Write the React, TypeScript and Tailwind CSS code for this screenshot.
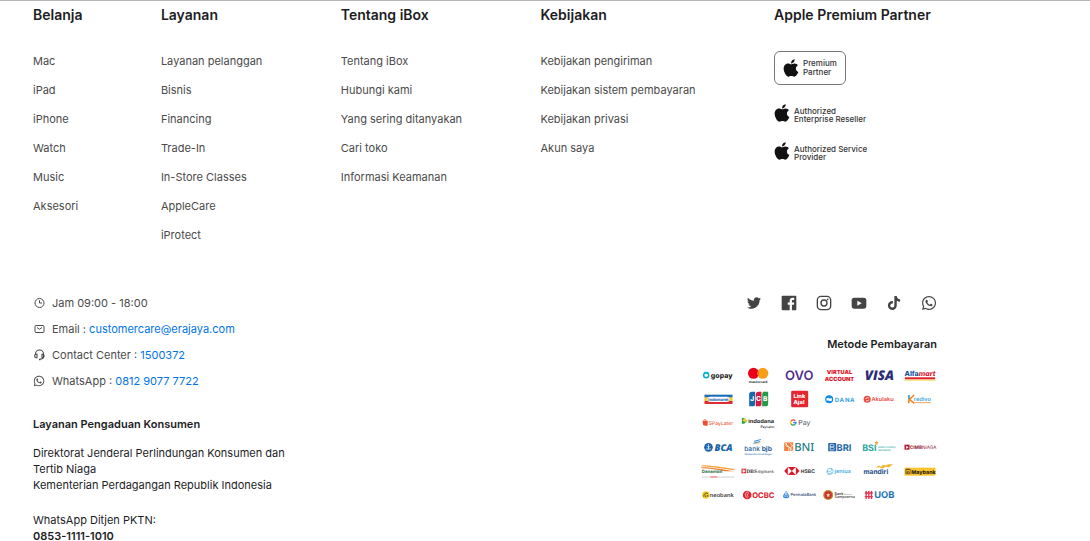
import type { ReactNode } from "react";
import { FaApple, FaTiktok, FaTwitter, FaWhatsapp } from "react-icons/fa";

const COLUMNS = [
  {
    title: "Belanja",
    links: ["Mac", "iPad", "iPhone", "Watch", "Music", "Aksesori"],
  },
  {
    title: "Layanan",
    links: [
      "Layanan pelanggan",
      "Bisnis",
      "Financing",
      "Trade-In",
      "In-Store Classes",
      "AppleCare",
      "iProtect",
    ],
  },
  {
    title: "Tentang iBox",
    links: [
      "Tentang iBox",
      "Hubungi kami",
      "Yang sering ditanyakan",
      "Cari toko",
      "Informasi Keamanan",
    ],
  },
  {
    title: "Kebijakan",
    links: [
      "Kebijakan pengiriman",
      "Kebijakan sistem pembayaran",
      "Kebijakan privasi",
      "Akun saya",
    ],
  },
];

function ClockIcon() {
  return (
    <svg viewBox="0 0 24 24" className="h-3 w-3" fill="none" stroke="currentColor" strokeWidth="2">
      <circle cx="13" cy="12" r="9" />
      <path d="M13 6.500V12h5" />
    </svg>
  );
}

function MailIcon() {
  return (
    <svg viewBox="0 0 24 24" className="h-3 w-3" fill="none" stroke="currentColor" strokeWidth="2">
      <rect x="4" y="5" width="18" height="14" rx="2" />
      <path d="M8 9l5 3.500L18 9" />
    </svg>
  );
}

function HeadsetIcon() {
  return (
    <svg viewBox="0 0 24 24" className="h-3 w-3" fill="none" stroke="currentColor" strokeWidth="2.2">
      <path d="M5 12v-2a8 8 0 0 1 16 0v5a5 5 0 0 1-5 5h-2" />
      <path d="M5 10.500h3v7H6a2.500 2.500 0 0 1-2.500-2.500v-2zM21 10.500h-3v7h1.500a2.500 2.500 0 0 0 2.500-2.500v-2z" />
      <path d="M12 21h3" strokeWidth="3" />
    </svg>
  );
}

function FacebookIcon() {
  return (
    <svg viewBox="0 0 24 24" className="h-4 w-4" fill="currentColor">
      <path d="M2.300 1h19.400c.7 0 1.300.6 1.300 1.300v19.400c0 .7-.6 1.300-1.300 1.300H16.400v-8.500h2.900l.4-3.400h-3.300V9c0-1 .3-1.600 1.700-1.600h1.700V4.300c-.3 0-1.300-.1-2.500-.1-2.600 0-4.300 1.500-4.300 4.400v2.500h-2.900v3.400H13V23H2.300C1.600 23 1 22.400 1 21.700V2.300C1 1.600 1.600 1 2.300 1z" />
    </svg>
  );
}

function InstagramIcon() {
  return (
    <svg viewBox="0 0 24 24" className="h-4 w-4" fill="none" stroke="currentColor" strokeWidth="2">
      <rect x="2" y="2" width="20" height="20" rx="5.500" />
      <circle cx="12" cy="12" r="4.500" />
      <circle cx="17.500" cy="6.500" r="1.300" fill="currentColor" stroke="none" />
    </svg>
  );
}

function YoutubeIcon() {
  return (
    <svg viewBox="0 0 24 24" className="h-4 w-4">
      <rect x="1" y="4" width="22" height="16.500" rx="4" fill="currentColor" />
      <path d="M9.500 8.500v7.500l6.500-3.750z" fill="#fff" />
    </svg>
  );
}

const SOCIALS = [
  { label: "Twitter", icon: <FaTwitter className="h-3.5 w-4" /> },
  { label: "Facebook", icon: <FacebookIcon /> },
  { label: "Instagram", icon: <InstagramIcon /> },
  { label: "YouTube", icon: <YoutubeIcon /> },
  { label: "TikTok", icon: <FaTiktok className="h-3.5 w-4" /> },
  { label: "WhatsApp", icon: <FaWhatsapp className="h-4 w-4" /> },
];

/* Every payment logo is drawn on the same 102x54 board */
function Logo({ name, children }: { name: string; children: ReactNode }) {
  return (
    <svg
      viewBox="0 0 102 54"
      role="img"
      aria-label={name}
      textRendering="geometricPrecision"
      className="h-[18px] w-full font-['Inter',sans-serif]"
    >
      {children}
    </svg>
  );
}

function PaymentLogos() {
  return (
    <div className="grid grid-cols-6 gap-1.5">
      <Logo name="GoPay">
        <circle cx="15" cy="28" r="7.500" fill="#fff" stroke="#00aed6" strokeWidth="4.500" />
        <path d="M10 20h11" stroke="#00aed6" strokeWidth="5" />
        <text x="29" y="35" fontSize="21" fontWeight="800" fill="#1c1c1c">gopay</text>
      </Logo>
      <Logo name="Mastercard">
        <circle cx="37" cy="22" r="16.500" fill="#eb001b" />
        <circle cx="65" cy="22" r="16.500" fill="#f79e1b" />
        <path d="M51 13.300a16.500 16.500 0 0 1 0 17.400a16.500 16.500 0 0 1 0-17.400z" fill="#ff5f00" />
        <text x="51" y="50" fontSize="10" fontWeight="700" textAnchor="middle" fill="#1c1c1c">mastercard</text>
      </Logo>
      <Logo name="OVO">
        <text x="51" y="42" fontSize="39" fontWeight="600" textAnchor="middle" fill="#4c2f91">OVO</text>
      </Logo>
      <Logo name="Virtual Account">
        <text x="52" y="24" fontSize="17" fontWeight="900" textAnchor="middle" fill="#e0182d">VIRTUAL</text>
        <text x="52" y="45" fontSize="17" fontWeight="900" textAnchor="middle" fill="#e0182d">ACCOUNT</text>
      </Logo>
      <Logo name="Visa">
        <text x="8" y="43" fontSize="40" fontWeight="800" fontStyle="italic" fill="#2a2c75" fontFamily="Open Sans, sans-serif">VISA</text>
      </Logo>
      <Logo name="Alfamart">
        <text x="4" y="29" fontSize="21" fontWeight="800" fill="#1458a8">
          Alfa<tspan fill="#e0182d" fontStyle="italic">mart</tspan>
        </text>
        <rect x="5" y="34" width="91" height="6" fill="#e0182d" />
        <rect x="5" y="41" width="91" height="3" fill="#fbd84a" />
      </Logo>

      <Logo name="Indomaret">
        <rect x="10" y="14" width="84" height="9" fill="#1b6bb8" />
        <rect x="10" y="22" width="84" height="12" fill="#f6c72f" />
        <rect x="10" y="33" width="84" height="9" fill="#df2b33" />
        <rect x="19" y="20" width="66" height="16" rx="7" fill="#fff" />
        <text x="52" y="33" fontSize="12" fontWeight="800" textAnchor="middle" fill="#2767b0">Indomaret</text>
      </Logo>
      <Logo name="JCB">
        <path d="M32 5h10v36a8 8 0 0 1-8 8H24V13a8 8 0 0 1 8-8z" fill="#1767ad" />
        <path d="M52 5h9v36a8 8 0 0 1-8 8h-9V13a8 8 0 0 1 8-8z" fill="#d5193f" />
        <path d="M72 5h9v36a8 8 0 0 1-8 8H63V13a8 8 0 0 1 9-8z" fill="#23994a" />
        <text y="34" fontSize="20" fontWeight="800" textAnchor="middle" fill="#fff">
          <tspan x="33">J</tspan>
          <tspan x="52">C</tspan>
          <tspan x="72">B</tspan>
        </text>
      </Logo>
      <Logo name="LinkAja">
        <rect x="27" y="2" width="51" height="50" rx="4" fill="#e4252f" />
        <text x="34" y="24" fontSize="17" fontWeight="800" fill="#fff">Link</text>
        <text x="34" y="41" fontSize="17" fontWeight="800" fill="#fff">Aja!</text>
      </Logo>
      <Logo name="DANA">
        <circle cx="21" cy="28" r="12" fill="#118eea" />
        <path d="M13 25c5-4 9 3 16-1v8c-6 4-10-3-16 0z" fill="#fff" />
        <text y="35" fontSize="18" fontWeight="700" textAnchor="middle" fill="#3a9fe8">
          <tspan x="44">D</tspan>
          <tspan x="59">A</tspan>
          <tspan x="75">N</tspan>
          <tspan x="90">A</tspan>
        </text>
      </Logo>
      <Logo name="Akulaku">
        <circle cx="15" cy="28" r="10.500" fill="#e9473f" />
        <path d="M11 31c2 3 8 2 9-2M10 27c2-4 6-5 10-3" stroke="#fff" strokeWidth="2.500" fill="none" />
        <text x="28" y="34" fontSize="17" fontWeight="600" fill="#e9473f">Akulaku</text>
      </Logo>
      <Logo name="Kredivo">
        <path d="M17 15v25M33 15L19 28l15 12" stroke="#f28a2e" strokeWidth="5" fill="none" />
        <path d="M17 15v12" stroke="#3da9d6" strokeWidth="5" />
        <text x="32" y="33" fontSize="17" fontWeight="600" fill="#3da9d6">redivo</text>
        <path d="M36 38h47" stroke="#f4a35c" strokeWidth="3" />
      </Logo>

      <Logo name="SPayLater">
        <path d="M4 20h8v14H6zM11 20h9l-1 15h-9z" fill="#ee4d2d" />
        <path d="M8 20c0-5 7-5 7 0" stroke="#ee4d2d" strokeWidth="2" fill="none" />
        <text x="23" y="34" fontSize="15" fontWeight="500" fill="#ee5a3c">SPayLater</text>
      </Logo>
      <Logo name="Indodana PayLater">
        <path d="M2 12h7l10 8-10 9H2z" fill="#29a745" />
        <path d="M9 12l10 8-6 4-9-4z" fill="#f5d02a" />
        <text x="21" y="27" fontSize="17" fontWeight="700" fill="#242424">indodana</text>
        <text x="58" y="42" fontSize="10" fontWeight="500" fill="#242424">PayLater</text>
      </Logo>
      <Logo name="Google Pay">
        <g fill="none" strokeWidth="4">
          <path d="M27 21a8 8 0 0 1 12-1" stroke="#ea4335" />
          <path d="M27 21a8 8 0 0 0 0 9" stroke="#fbbc05" />
          <path d="M27 30a8 8 0 0 0 12 1" stroke="#34a853" />
          <path d="M39 31a8 8 0 0 0 2.500-5.500H33" stroke="#4285f4" />
        </g>
        <text x="48" y="34" fontSize="21" fontWeight="400" fill="#4f5357">Pay</text>
      </Logo>
    </div>
  );
}

function BankLogos() {
  return (
    <div className="grid grid-cols-6 gap-1.5">
      <Logo name="BCA">
        <circle cx="22" cy="28" r="13" fill="#1963ab" />
        <path d="M22 18v17M16 24c3 0 3 4 6 4s3-4 6-4M14 33h16" stroke="#fff" strokeWidth="2" fill="none" />
        <text x="40" y="39" fontSize="28" fontWeight="800" fontStyle="italic" fill="#1963ab" fontFamily="Open Sans, sans-serif">BCA</text>
      </Logo>
      <Logo name="bank bjb">
        <path d="M39 8l20-5v3L39 12zM37 14l20-5v3l-20 6z" fill="#4a8fc9" />
        <path d="M41 17l17-4v2l-17 4z" fill="#e9b93a" />
        <text x="9" y="40" fontSize="20" fontWeight="500" fill="#2b5f9c">
          bank <tspan fontWeight="700">bjb</tspan>
        </text>
        <text x="51" y="51" fontSize="7" fontWeight="600" textAnchor="middle" fill="#4c7eb3">Tandamata Untuk Negeri</text>
      </Logo>
      <Logo name="BNI">
        <rect x="6" y="13" width="27" height="26" fill="#ee8140" />
        <path d="M6 13l27 26M14 13l-3 10 10 5-2 11M22 13l11 13M24 39l2-12 7-6" stroke="#fff" strokeWidth="2" fill="none" />
        <text x="36" y="39" fontSize="34" fontWeight="500" fill="#2c7d86" fontFamily="Noto Sans, sans-serif">BNI</text>
      </Logo>
      <Logo name="BRI">
        <rect x="18" y="15" width="24" height="25" rx="2" fill="#2366a8" />
        <path d="M24 36V19h8c5 0 5 8 0 8h-8 8c6 1 6 9 0 9h-8" stroke="#fff" strokeWidth="2" fill="none" />
        <text x="43" y="38" fontSize="28" fontWeight="700" fill="#2366a8">BRI</text>
      </Logo>
      <Logo name="Bank Syariah Indonesia">
        <text x="0" y="39" fontSize="27" fontWeight="700" fill="#2ba7a0">BSI</text>
        <path d="M43 8l2 4 4 1-3 3 1 5-4-2-4 2 1-5-3-3 4-1z" fill="#f4a232" />
        <text x="48" y="30" fontSize="7" fontWeight="500" fill="#2ba7a0">BANK SYARIAH</text>
        <text x="48" y="39" fontSize="7" fontWeight="500" fill="#2ba7a0">INDONESIA</text>
      </Logo>
      <Logo name="CIMB Niaga">
        <rect x="4" y="20" width="15" height="15" fill="#b0182f" />
        <path d="M9 23l7 5-7 5z" fill="#fff" />
        <text x="20" y="33" fontSize="14" fontWeight="700" fill="#8f2136">
          CIMB<tspan fontWeight="400">NIAGA</tspan>
        </text>
      </Logo>

      <Logo name="Danamon">
        <path d="M1 10c30 0 60 5 99 11v4C62 20 30 14 1 13z" fill="#f3a33a" />
        <path d="M1 16c30 0 60 6 99 12H70C50 24 25 19 1 19z" fill="#ee7d35" />
        <text x="2" y="34" fontSize="13" fontWeight="800" fill="#3c8054">Danamon</text>
        <path d="M2 45h24M50 45h50" stroke="#b9b9b9" strokeWidth="2" />
        <path d="M27 45h22" stroke="#e0525b" strokeWidth="3" />
      </Logo>
      <Logo name="DBS digibank">
        <rect x="1" y="20" width="14" height="14" fill="#df2f38" />
        <path d="M8 21l2 4 4 2-4 2-2 4-2-4-4-2 4-2z" fill="#fff" />
        <text x="16" y="33" fontSize="16" fontWeight="700" fill="#303030" fontFamily="Liberation Serif, serif">DBS</text>
        <text x="49" y="33" fontSize="12" fontWeight="500" fill="#5d5d5d">digibank</text>
      </Logo>
      <Logo name="HSBC">
        <path d="M6 27l11-12h24l11 12-11 12H17z" fill="#db1728" />
        <path d="M17 15l12 12-12 12zM41 15L29 27l12 12z" fill="#fff" />
        <text x="56" y="33" fontSize="15" fontWeight="700" fill="#333">HSBC</text>
      </Logo>
      <Logo name="Jenius">
        <circle cx="24" cy="28" r="9" fill="none" stroke="#3fb1e3" strokeWidth="2" />
        <path d="M13 31c1-6 8-2 11-3s6-6 4-10M16 37c7 0 8-5 14-5" stroke="#3fb1e3" strokeWidth="2" fill="none" />
        <text x="37" y="34" fontSize="17" fontWeight="600" fill="#42afdf">jenius</text>
      </Logo>
      <Logo name="Mandiri">
        <text x="4" y="36" fontSize="20" fontWeight="700" fill="#1e4b86">mandiri</text>
        <path d="M41 18c5-8 10-9 15-4 5-5 9-7 15-3 6-4 11-5 23-3-8 0-9 9-17 8-4-1-5-3-9 0-5 4-9 4-13 1-5-3-9-1-14 1z" fill="#f4b529" />
      </Logo>
      <Logo name="Maybank">
        <rect x="4" y="17" width="93" height="24" fill="#fbc42d" />
        <path d="M8 22h13v13H8zM12 20v4M17 20v4M12 26v7l4-5 2 5" stroke="#3c3520" strokeWidth="2" fill="none" />
        <text x="24" y="35" fontSize="16" fontWeight="800" fill="#2b2718">Maybank</text>
      </Logo>

      <Logo name="neobank">
        <circle cx="14" cy="27" r="11" fill="#f5cc22" />
        <path d="M8 32c0-9 6-13 12-9M14 33v-5M20 32v-5" stroke="#4c4636" strokeWidth="3" fill="none" />
        <text x="26" y="33" fontSize="17" fontWeight="600" fill="#434343">neobank</text>
      </Logo>
      <Logo name="OCBC">
        <circle cx="18" cy="27" r="13" fill="#e3202e" />
        <path d="M23 18c-11-3-15 14-3 18M23 23c-6-1-7 7-1 9" stroke="#fff" strokeWidth="2" fill="none" />
        <text x="33" y="35" fontSize="23" fontWeight="700" fill="#e3202e">OCBC</text>
      </Logo>
      <Logo name="PermataBank">
        <path d="M12 14l4 6 5 8c2 7-4 10-9 8-5 2-11-1-9-8l5-8z" fill="#3c8ddd" />
        <path d="M12 18l3 6-3 4-3-4zM6 28l4 5M18 28l-4 5" stroke="#fff" strokeWidth="2" fill="none" />
        <text x="25" y="31" fontSize="12" fontWeight="600" fill="#475d7a">PermataBank</text>
      </Logo>
      <Logo name="Bank Sahabat Sampoerna">
        <circle cx="18" cy="27" r="15" fill="#b69238" />
        <circle cx="18" cy="27" r="11" fill="#ce2a2d" />
        <path d="M18 20l2 5h5l-4 3 1 6-4-3-4 3 1-6-4-3h5z" fill="#f1d7ab" />
        <text x="37" y="26" fontSize="11" fontWeight="700" fill="#555">
          Bank <tspan fontSize="6" fontWeight="400">Sahabat</tspan>
        </text>
        <text x="37" y="37" fontSize="11" fontWeight="600" fill="#555">Sampoerna</text>
      </Logo>
      <Logo name="UOB">
        <path d="M12 15v24M20 15v24M28 15v24M8 21h24M8 32h24" stroke="#e5324c" strokeWidth="4" />
        <text x="36" y="37" fontSize="28" fontWeight="700" fill="#1a74b8">UOB</text>
      </Logo>
    </div>
  );
}

function PartnerBadge({ lines }: { lines: string[] }) {
  return (
    <div className="flex items-center gap-1">
      <FaApple className="h-5 w-4 shrink-0 text-[#111]" />
      <p className="pt-1 text-[8px] leading-2 font-medium text-[#333]">
        {lines[0]}
        <br />
        {lines[1]}
      </p>
    </div>
  );
}

export default function App() {
  return (
    <footer className="border-t border-[#b4b4b4] bg-white pr-[153px] pl-[33px] font-['Inter',sans-serif] text-[11px] leading-4 text-[#4a4a4a]">
      <div className="flex justify-between pt-1">
        {COLUMNS.map((column) => (
          <div key={column.title}>
            <h3 className="text-sm leading-5 font-semibold text-[#1d1d1f]">{column.title}</h3>
            <ul className="mt-7 flex flex-col gap-[13px]">
              {column.links.map((link) => (
                <li key={link}>
                  <a href="#" className="block">{link}</a>
                </li>
              ))}
            </ul>
          </div>
        ))}
        <div className="w-[163px]">
          <h3 className="text-sm leading-5 font-semibold text-[#1d1d1f]">Apple Premium Partner</h3>
          <div className="mt-[26px] flex w-[72px] items-center gap-1 rounded-md border border-[#777] px-2 py-1.5">
            <FaApple className="h-5 w-4 shrink-0 text-[#111]" />
            <p className="text-[8px] leading-[9px] font-medium text-[#333]">
              Premium
              <br />
              Partner
            </p>
          </div>
          <div className="mt-[18px] flex flex-col gap-[18px]">
            <PartnerBadge lines={["Authorized", "Enterprise Reseller"]} />
            <PartnerBadge lines={["Authorized Service", "Provider"]} />
          </div>
        </div>
      </div>

      <div className="mt-[52px] flex justify-between">
        <div className="w-[264px]">
          <ul className="flex flex-col gap-2.5">
            <li className="flex items-center gap-[7px]">
              <ClockIcon />
              <span>Jam 09:00 - 18:00</span>
            </li>
            <li className="flex items-center gap-[7px]">
              <MailIcon />
              <span>
                Email : <a href="mailto:customercare@erajaya.com" className="text-[#0073e6]">customercare@erajaya.com</a>
              </span>
            </li>
            <li className="flex items-center gap-[7px]">
              <HeadsetIcon />
              <span>
                Contact Center : <a href="tel:1500372" className="text-[#0073e6]">1500372</a>
              </span>
            </li>
            <li className="flex items-center gap-[7px]">
              <FaWhatsapp className="h-3 w-3" />
              <span>
                WhatsApp : <a href="https://wa.me/6281290777722" className="text-[#0073e6]">0812 9077 7722</a>
              </span>
            </li>
          </ul>
          <div className="mt-[27px] text-[#1d1d1f]">
            <h4 className="font-semibold">Layanan Pengaduan Konsumen</h4>
            <p className="mt-[13px]">
              Direktorat Jenderal Perlindungan Konsumen dan Tertib Niaga
              <br />
              Kementerian Perdagangan Republik Indonesia
            </p>
            <p className="mt-[19px]">
              WhatsApp Ditjen PKTN:
              <br />
              <strong className="font-semibold">0853-1111-1010</strong>
            </p>
          </div>
        </div>

        <div className="w-[236px]">
          <div className="flex justify-end gap-[19px] text-[#444]">
            {SOCIALS.map((social) => (
              <a key={social.label} href="#" aria-label={social.label} className="flex h-4 items-center">
                {social.icon}
              </a>
            ))}
          </div>
          <h4 className="mt-[25px] mb-3.5 text-right font-semibold text-[#1d1d1f]">Metode Pembayaran</h4>
          <PaymentLogos />
          <div className="mt-1.5">
            <BankLogos />
          </div>
        </div>
      </div>
    </footer>
  );
}
